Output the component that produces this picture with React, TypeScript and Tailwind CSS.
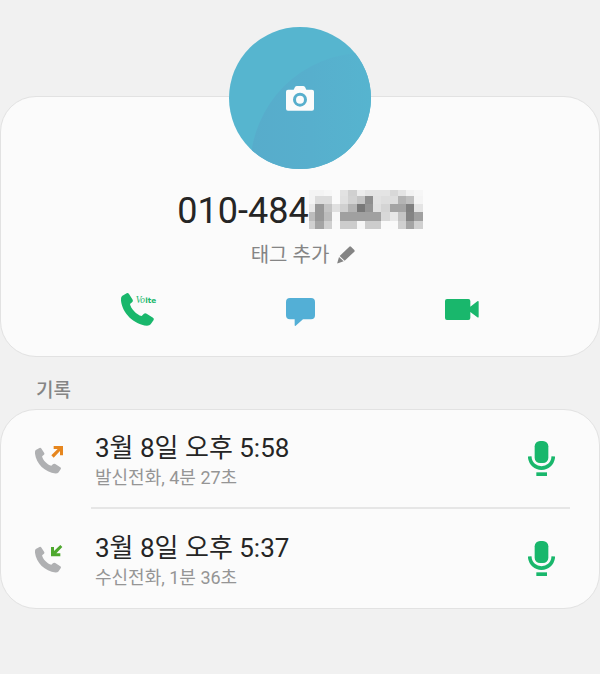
import { memo } from 'react';

interface CallRecord {
    id: number;
    time: string;
    detail: string;
    direction: 'outgoing' | 'incoming';
}

const RECORDS: CallRecord[] = [
    { id: 1, time: '3월 8일 오후 5:58', detail: '발신전화, 4분 27초', direction: 'outgoing' },
    { id: 2, time: '3월 8일 오후 5:37', detail: '수신전화, 1분 36초', direction: 'incoming' },
];

const HANDSET =
    'M3 9 L17 1 Q21 -1 24 3 L35 20 Q37 24 34 27 L27 33 C29 47 47 66 62 69 L68 63 Q72 59 77 62 L96 74 Q100 77 98 81 L89 94 Q86 98 78 98 C38 94 4 60 0 23 Q-1 13 3 9Z';

// Masked digits: one grey level per block, row by row
const MOSAIC_X = [0, 18, 43, 68, 93, 118, 143, 168, 193, 218, 243, 268, 293, 318, 343];
const MOSAIC_Y = [0, 18, 43, 68, 93, 118];
const MOSAIC = [
    ['f4', 'f4', 'f7', 'fa', 'e2', 'd0', 'ec', 'e4', 'e4', 'e4', 'd8', 'e4', 'f2', 'f6'],
    ['f4', 'dc', 'dc', 'fa', 'e0', 'd2', 'c4', '8e', 'e2', 'de', 'de', 'b4', 'c0', 'f4'],
    ['e8', '98', 'c4', 'e0', 'd0', 'b4', '78', '94', 'e0', 'd4', 'a4', 'a4', '80', 'e4'],
    ['bc', '98', 'bc', 'f8', 'a0', 'a0', 'a0', 'a0', 'a0', 'd8', 'e8', 'c4', '84', 'a0'],
    ['d0', 'a4', 'd0', 'fa', 'cc', 'cc', 'f6', 'cc', 'cc', 'fa', 'fa', 'd0', 'a4', 'd0'],
];

const Mosaic: React.FC = () => (
    <svg viewBox="0 0 343 118" className="mt-px h-[39px] w-[114px]" shapeRendering="crispEdges" aria-hidden="true">
        {MOSAIC.map((row, y) =>
            row.map((level, x) => (
                <rect
                    key={`${x}-${y}`}
                    x={MOSAIC_X[x]}
                    y={MOSAIC_Y[y]}
                    width={MOSAIC_X[x + 1] - MOSAIC_X[x]}
                    height={MOSAIC_Y[y + 1] - MOSAIC_Y[y]}
                    fill={`#${level}${level}${level}`}
                />
            ))
        )}
    </svg>
);

const Avatar: React.FC = () => (
    <svg viewBox="0 0 426 426" className="size-[142px]" aria-hidden="true">
        <defs>
            <clipPath id="avatar-clip">
                <circle cx="213" cy="213" r="213" />
            </clipPath>
            <linearGradient id="avatar-shade" gradientUnits="userSpaceOnUse" x1="64" y1="0" x2="426" y2="0">
                <stop offset="0" stopColor="#57accb" />
                <stop offset="0.5" stopColor="#57afcd" />
                <stop offset="1" stopColor="#56b4cf" />
            </linearGradient>
        </defs>
        <g clipPath="url(#avatar-clip)">
            <rect width="426" height="426" fill="#56b5cf" />
            <circle cx="409" cy="422" r="345" fill="url(#avatar-shade)" />
        </g>
        <path
            fill="#fbfbfb"
            fillRule="evenodd"
            d="M177 188 L194 188 L198 180 Q200 177 204 177 L222 177 Q226 177 228 180 L232 188 L249 188 Q255 188 255 194 L255 245 Q255 251 249 251 L177 251 Q171 251 171 245 L171 194 Q171 188 177 188Z M213 197 A21 21 0 1 0 213 239 A21 21 0 1 0 213 197Z"
        />
        <circle cx="213" cy="218" r="12" fill="#fbfbfb" />
    </svg>
);

const VolteIcon: React.FC = () => (
    <svg viewBox="0 0 105 99" className="h-[33px] w-[35px] overflow-visible" aria-hidden="true">
        <path d={HANDSET} fill="#19b76c" />
        <text x="44" y="30" fill="#19b76c" fontSize="28" fontStyle="italic" fontFamily="Liberation Serif, serif">
            Vo
        </text>
        <text x="73" y="29" fill="#19b76c" fontSize="22" fontWeight="700" fontFamily="DejaVu Sans, sans-serif">
            lte
        </text>
    </svg>
);

const MessageIcon: React.FC = () => (
    <svg viewBox="0 0 87 84" className="h-[28px] w-[29px]" aria-hidden="true">
        <path
            d="M12 0 H75 Q87 0 87 12 V52 Q87 64 75 64 H51 L29 83 Q26 85 26 81 V64 H12 Q0 64 0 52 V12 Q0 0 12 0Z"
            fill="#53afd6"
        />
    </svg>
);

const VideoIcon: React.FC = () => (
    <svg viewBox="0 0 102 63" className="h-[21px] w-[34px]" aria-hidden="true">
        <path
            d="M6 0 H70 Q76 0 76 6 V23 L97 7 Q101 5 101 9 V53 Q101 57 97 55 L76 39 V57 Q76 63 70 63 H6 Q0 63 0 57 V6 Q0 0 6 0Z"
            fill="#19b76c"
        />
    </svg>
);

const PencilIcon: React.FC = () => (
    <svg viewBox="0 0 54 54" className="size-[18px]" aria-hidden="true">
        <path
            d="M37 2 Q39 0 42 2 L52 12 Q54 15 52 17 L23 44 L8 30Z M6 33 L20 46 L3 52 Q0 53 1 50Z"
            fill="#848484"
        />
    </svg>
);

const MicIcon: React.FC = () => (
    <svg viewBox="0 0 81 105" className="h-[35px] w-[27px]" aria-hidden="true">
        <rect x="20" y="0" width="41" height="66" rx="16" fill="#19b76c" />
        <path d="M5 46 C8 93 73 93 76 46" fill="none" stroke="#19b76c" strokeWidth="11" />
        <rect x="25" y="94" width="32" height="11" fill="#19b76c" />
    </svg>
);

const DirectionIcon: React.FC<{ direction: CallRecord['direction'] }> = ({ direction }) => (
    <svg viewBox="0 0 84 84" className="size-[28px]" aria-hidden="true">
        <path d={HANDSET} fill="#afb0b2" transform="translate(0 5) scale(0.79)" />
        {direction === 'outgoing' ? (
            <path d="M56 0 H84 V28 H75 V15 L56 35 L49 28 L68 9 H56Z" fill="#e6861e" />
        ) : (
            <path d="M76 34 H48 V6 H57 V18 L76 0 L82 6 L64 25 H76Z" fill="#4ea82e" />
        )}
    </svg>
);

const ProfileCard: React.FC = memo(() => (
    <section className="flex flex-col items-center rounded-[36px] border border-[#e2e2e2] bg-[#fbfbfb] pb-[27px]">
        <button type="button" aria-label="사진 추가" className="-mt-[70px] rounded-full">
            <Avatar />
        </button>

        {/* Number */}
        <div className="mt-5 flex items-start">
            <h1 className="text-4xl leading-[44px] text-[#252525]">010-484</h1>
            <Mosaic />
        </div>

        {/* Tag */}
        <button type="button" className="mt-2 flex items-center gap-2 pl-1.5 text-xl leading-7 text-[#858585]">
            태그 추가
            <PencilIcon />
        </button>

        {/* Actions */}
        <div className="mt-5 grid w-full grid-cols-3 px-14">
            <button type="button" aria-label="전화" className="flex h-10 items-center justify-center">
                <VolteIcon />
            </button>
            <button type="button" aria-label="메시지" className="flex h-10 items-center justify-center pt-1.5">
                <MessageIcon />
            </button>
            <button type="button" aria-label="영상통화" className="flex h-10 items-center justify-center">
                <VideoIcon />
            </button>
        </div>
    </section>
));

ProfileCard.displayName = 'ProfileCard';

const RecordRow: React.FC<{ record: CallRecord }> = ({ record }) => (
    <li className="group flex pl-[34px] pr-[29px]">
        <div className="flex w-14 shrink-0 items-center">
            <DirectionIcon direction={record.direction} />
        </div>
        <div className="flex h-[99px] flex-1 items-center justify-between border-b-2 border-[#e6e6e6] pl-1 pr-[15px] group-last:border-b-0">
            <div className="pt-1.5">
                <p className="text-[26px] leading-8 text-[#252525]">{record.time}</p>
                <p className="text-lg leading-7 text-[#959595]">{record.detail}</p>
            </div>
            <button type="button" aria-label="녹음 듣기">
                <MicIcon />
            </button>
        </div>
    </li>
);

export default function App() {
    return (
        <main className="min-h-screen bg-[#f1f1f1] pt-24 font-['Roboto','Noto_Sans_CJK_KR',sans-serif]">
            <ProfileCard />
            <h2 className="px-9 pb-1 pt-5 text-[19px] font-medium leading-7 text-[#858585]">기록</h2>
            <ul className="rounded-[36px] border border-[#e2e2e2] bg-[#fbfbfb]">
                {RECORDS.map((record) => (
                    <RecordRow key={record.id} record={record} />
                ))}
            </ul>
        </main>
    );
}
